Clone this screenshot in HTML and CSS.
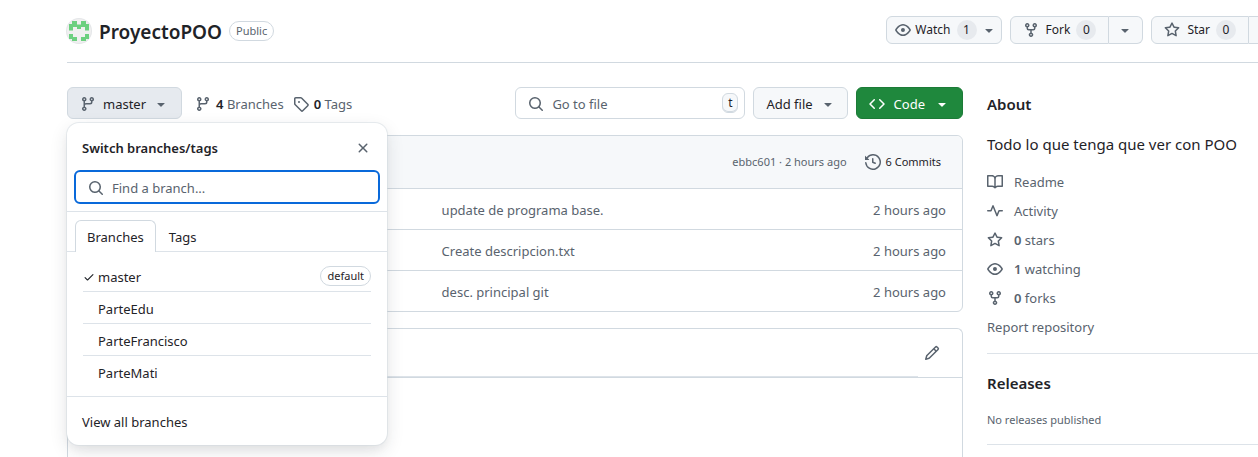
FILE: index.html
```html
<!DOCTYPE html>
<html lang="en">
<head>
<meta charset="utf-8">
<title>ProyectoPOO</title>
<link rel="stylesheet" href="styles.css">
</head>
<body>
<svg class="sprite" aria-hidden="true">
  <symbol id="branch" viewBox="0 0 16 16"><path d="M9.5 3.25a2.25 2.25 0 1 1 3 2.122V6A2.5 2.5 0 0 1 10 8.5H6a1 1 0 0 0-1 1v1.128a2.251 2.251 0 1 1-1.5 0V5.372a2.25 2.25 0 1 1 1.5 0v1.836A2.493 2.493 0 0 1 6 7h4a1 1 0 0 0 1-1v-.628A2.25 2.25 0 0 1 9.5 3.25Zm-6 0a.75.75 0 1 0 1.5 0 .75.75 0 0 0-1.5 0Zm8.25-.75a.75.75 0 1 0 0 1.5.75.75 0 0 0 0-1.5ZM4.25 12a.75.75 0 1 0 0 1.5.75.75 0 0 0 0-1.5Z"/></symbol>
  <symbol id="tag" viewBox="0 0 16 16"><path d="M1 7.775V2.75C1 1.784 1.784 1 2.75 1h5.025c.464 0 .91.184 1.238.513l6.25 6.25a1.75 1.75 0 0 1 0 2.474l-5.026 5.026a1.75 1.75 0 0 1-2.474 0l-6.25-6.25A1.752 1.752 0 0 1 1 7.775Zm1.5 0c0 .066.026.13.073.177l6.25 6.25a.25.25 0 0 0 .354 0l5.025-5.025a.25.25 0 0 0 0-.354l-6.25-6.25a.25.25 0 0 0-.177-.073H2.75a.25.25 0 0 0-.25.25ZM6 5a1 1 0 1 1 0 2 1 1 0 0 1 0-2Z"/></symbol>
  <symbol id="caret" viewBox="0 0 16 16"><path d="m4.427 7.427 3.396 3.396a.25.25 0 0 0 .354 0l3.396-3.396A.25.25 0 0 0 11.396 7H4.604a.25.25 0 0 0-.177.427Z"/></symbol>
  <symbol id="search" viewBox="0 0 16 16"><path d="M10.68 11.74a6 6 0 0 1-7.922-8.982 6 6 0 0 1 8.982 7.922l3.04 3.04a.749.749 0 0 1-.326 1.275.749.749 0 0 1-.734-.215ZM11.5 7a4.499 4.499 0 1 0-8.997 0A4.499 4.499 0 0 0 11.5 7Z"/></symbol>
  <symbol id="x" viewBox="0 0 16 16"><path d="M3.72 3.72a.75.75 0 0 1 1.06 0L8 6.94l3.22-3.22a.749.749 0 0 1 1.275.326.749.749 0 0 1-.215.734L9.06 8l3.22 3.22a.749.749 0 0 1-.326 1.275.749.749 0 0 1-.734-.215L8 9.06l-3.22 3.22a.751.751 0 0 1-1.042-.018.751.751 0 0 1-.018-1.042L6.94 8 3.72 4.78a.75.75 0 0 1 0-1.06Z"/></symbol>
  <symbol id="check" viewBox="0 0 16 16"><path d="M13.78 4.22a.75.75 0 0 1 0 1.06l-7.25 7.25a.75.75 0 0 1-1.06 0L2.22 9.28a.751.751 0 0 1 .018-1.042.751.751 0 0 1 1.042-.018L6 10.94l6.72-6.72a.75.75 0 0 1 1.06 0Z"/></symbol>
  <symbol id="code" viewBox="0 0 16 16"><path d="m11.28 3.22 4.25 4.25a.75.75 0 0 1 0 1.06l-4.25 4.25a.749.749 0 0 1-1.275-.326.749.749 0 0 1 .215-.734L13.94 8l-3.72-3.72a.749.749 0 0 1 .326-1.275.749.749 0 0 1 .734.215Zm-6.56 0a.751.751 0 0 1 1.042.018.751.751 0 0 1 .018 1.042L2.06 8l3.72 3.72a.749.749 0 0 1-.326 1.275.749.749 0 0 1-.734-.215L.47 8.53a.75.75 0 0 1 0-1.06Z"/></symbol>
  <symbol id="history" viewBox="0 0 16 16"><path d="m.427 1.927 1.215 1.215a8.002 8.002 0 1 1-1.6 5.685.75.75 0 1 1 1.493-.154 6.5 6.5 0 1 0 1.18-4.458l1.358 1.358A.25.25 0 0 1 3.896 6H.25A.25.25 0 0 1 0 5.75V2.104a.25.25 0 0 1 .427-.177ZM7.75 4a.75.75 0 0 1 .75.75v2.992l2.028.812a.75.75 0 0 1-.557 1.392l-2.5-1A.751.751 0 0 1 7 8.25v-3.5A.75.75 0 0 1 7.75 4Z"/></symbol>
  <symbol id="eye" viewBox="0 0 16 16"><path d="M8 2c1.981 0 3.671.992 4.933 2.078 1.27 1.091 2.187 2.345 2.637 3.023a1.62 1.62 0 0 1 0 1.798c-.45.678-1.367 1.932-2.637 3.023C11.67 13.008 9.981 14 8 14c-1.981 0-3.671-.992-4.933-2.078C1.797 10.83.88 9.576.43 8.898a1.62 1.62 0 0 1 0-1.798c.45-.677 1.367-1.931 2.637-3.022C4.33 2.992 6.019 2 8 2ZM1.679 7.932a.12.12 0 0 0 0 .136c.411.622 1.241 1.75 2.366 2.717C5.176 11.758 6.527 12.5 8 12.5c1.473 0 2.825-.742 3.955-1.715 1.124-.967 1.954-2.096 2.366-2.717a.12.12 0 0 0 0-.136c-.412-.621-1.242-1.75-2.366-2.717C10.824 4.242 9.473 3.5 8 3.5c-1.473 0-2.825.742-3.955 1.715-1.124.967-1.954 2.096-2.366 2.717ZM8 10a2 2 0 1 1-.001-3.999A2 2 0 0 1 8 10Z"/></symbol>
  <symbol id="fork" viewBox="0 0 16 16"><path d="M5 5.372v.878c0 .414.336.75.75.75h4.5a.75.75 0 0 0 .75-.75v-.878a2.25 2.25 0 1 1 1.5 0v.878a2.25 2.25 0 0 1-2.25 2.25h-1.5v2.128a2.251 2.251 0 1 1-1.5 0V8.5h-1.5A2.25 2.25 0 0 1 3.5 6.25v-.878a2.25 2.25 0 1 1 1.5 0ZM5 3.25a.75.75 0 1 0-1.5 0 .75.75 0 0 0 1.5 0Zm6.75.75a.75.75 0 1 0 0-1.5.75.75 0 0 0 0 1.5Zm-3 8.75a.75.75 0 1 0-1.5 0 .75.75 0 0 0 1.5 0Z"/></symbol>
  <symbol id="star" viewBox="0 0 16 16"><path d="M8 .25a.75.75 0 0 1 .673.418l1.882 3.815 4.21.612a.75.75 0 0 1 .416 1.279l-3.046 2.97.719 4.192a.751.751 0 0 1-1.088.791L8 12.347l-3.766 1.98a.75.75 0 0 1-1.088-.79l.72-4.194L.818 6.374a.75.75 0 0 1 .416-1.28l4.21-.611L7.327.668A.75.75 0 0 1 8 .25Zm0 2.445L6.615 5.5a.75.75 0 0 1-.564.41l-3.097.45 2.24 2.184a.75.75 0 0 1 .216.664l-.528 3.084 2.769-1.456a.75.75 0 0 1 .698 0l2.77 1.456-.53-3.084a.75.75 0 0 1 .216-.664l2.24-2.183-3.096-.45a.75.75 0 0 1-.564-.41L8 2.694Z"/></symbol>
  <symbol id="book" viewBox="0 0 16 16"><path d="M0 1.75A.75.75 0 0 1 .75 1h4.253c1.227 0 2.317.59 3 1.501A3.743 3.743 0 0 1 11.006 1h4.245a.75.75 0 0 1 .75.75v10.5a.75.75 0 0 1-.75.75h-4.507a2.25 2.25 0 0 0-1.591.659l-.622.621a.75.75 0 0 1-1.06 0l-.622-.621A2.25 2.25 0 0 0 5.258 13H.75a.75.75 0 0 1-.75-.75Zm7.251 10.324.004-5.073-.002-2.253A2.25 2.25 0 0 0 5.003 2.5H1.5v9h3.757a3.75 3.75 0 0 1 1.994.574ZM8.755 4.75l-.004 7.322a3.752 3.752 0 0 1 1.992-.572H14.5v-9h-3.495a2.25 2.25 0 0 0-2.25 2.25Z"/></symbol>
  <symbol id="pulse" viewBox="0 0 16 16"><path d="M6 2c.306 0 .582.187.696.471L10 10.731l1.304-3.26A.751.751 0 0 1 12 7h3.25a.75.75 0 0 1 0 1.5h-2.742l-1.812 4.528a.751.751 0 0 1-1.392 0L6 4.77 4.696 8.03A.75.75 0 0 1 4 8.5H.75a.75.75 0 0 1 0-1.5h2.742l1.812-4.529A.751.751 0 0 1 6 2Z"/></symbol>
  <symbol id="pencil" viewBox="0 0 16 16"><path d="M11.013 1.427a1.75 1.75 0 0 1 2.474 0l1.086 1.086a1.75 1.75 0 0 1 0 2.474l-8.61 8.61c-.21.21-.47.364-.756.445l-3.251.93a.75.75 0 0 1-.927-.928l.929-3.25c.081-.286.235-.547.445-.758l8.61-8.61Zm.176 4.823L9.75 4.81l-6.286 6.287a.253.253 0 0 0-.064.108l-.558 1.953 1.953-.558a.253.253 0 0 0 .108-.064Zm1.238-3.763a.25.25 0 0 0-.354 0L10.811 3.75l1.439 1.44 1.263-1.263a.25.25 0 0 0 0-.354Z"/></symbol>
</svg>
<div class="page">
  <header class="repo-head">
    <svg class="avatar" viewBox="0 0 26 26" role="img" aria-label="Owner"><circle cx="13" cy="13" r="13" fill="#e4e6e8"/><circle cx="13" cy="13" r="12" fill="#f0f0f0"/><path fill="#6cd07f" d="M6 3h5v3.5h4V3h5v3h3v6.5h-4V9h-4v2h-4V9H7v3.5H3V6h3zM3 16h4v3h4v4H6v-2H3zM23 16h-4v3h-4v4h5v-2h3z"/></svg>
    <h1 class="repo-name">ProyectoPOO</h1>
    <span class="pill">Public</span>
    <div class="head-actions">
      <button class="btn btn-sm watch"><svg class="icon"><use href="#eye"/></svg>Watch <span class="count">1</span><svg class="icon"><use href="#caret"/></svg></button>
      <div class="group">
        <button class="btn btn-sm first"><svg class="icon"><use href="#fork"/></svg><span>Fork</span><span class="count">0</span></button>
        <button class="btn btn-sm last" aria-label="Fork options"><svg class="icon"><use href="#caret"/></svg></button>
      </div>
      <div class="group">
        <button class="btn btn-sm first"><svg class="icon"><use href="#star"/></svg><span>Star</span><span class="count">0</span></button>
        <button class="btn btn-sm last" aria-label="Star options"><svg class="icon"><use href="#caret"/></svg></button>
      </div>
    </div>
  </header>
  <div class="columns">
    <main class="main">
      <div class="toolbar">
        <div class="switcher">
          <button class="btn btn-active"><svg class="icon"><use href="#branch"/></svg>master<svg class="icon"><use href="#caret"/></svg></button>
          <div class="popup" role="dialog" aria-labelledby="popup-title">
            <div class="popup-head">
              <h2 class="popup-title" id="popup-title">Switch branches/tags</h2>
              <button class="close" aria-label="Close"><svg class="icon"><use href="#x"/></svg></button>
            </div>
            <div class="popup-search">
              <label class="field field-focus"><svg class="icon"><use href="#search"/></svg><input type="text" placeholder="Find a branch..." aria-label="Find a branch"></label>
            </div>
            <div class="tabs" role="tablist">
              <button class="tab tab-on" role="tab" aria-selected="true">Branches</button>
              <button class="tab" role="tab" aria-selected="false">Tags</button>
            </div>
            <ul class="branches">
              <li><svg class="tick"><use href="#check"/></svg><a href="#">master</a><span class="pill pill-dark">default</span></li>
              <li><a href="#">ParteEdu</a></li>
              <li><a href="#">ParteFrancisco</a></li>
              <li><a href="#">ParteMati</a></li>
            </ul>
            <a class="view-all" href="#">View all branches</a>
          </div>
        </div>
        <nav class="refs">
          <a href="#"><svg class="icon"><use href="#branch"/></svg><span><strong>4</strong> Branches</span></a>
          <a href="#"><svg class="icon"><use href="#tag"/></svg><span><strong>0</strong> Tags</span></a>
        </nav>
        <label class="field file-search"><svg class="icon"><use href="#search"/></svg><input type="text" placeholder="Go to file" aria-label="Go to file"><kbd>t</kbd></label>
        <button class="btn btn-add">Add file<svg class="icon"><use href="#caret"/></svg></button>
        <button class="btn btn-code"><svg class="icon"><use href="#code"/></svg>Code<svg class="icon"><use href="#caret"/></svg></button>
      </div>
      <section class="box">
        <div class="commit-bar">
          <span>ebbc601 · 2 hours ago</span>
          <a href="#"><svg class="icon"><use href="#history"/></svg>6 Commits</a>
        </div>
        <table class="files">
          <tbody>
            <tr><td class="name"></td><td>update de programa base.</td><td class="age">2 hours ago</td></tr>
            <tr><td class="name"></td><td>Create descripcion.txt</td><td class="age">2 hours ago</td></tr>
            <tr><td class="name"></td><td>desc. principal git</td><td class="age">2 hours ago</td></tr>
          </tbody>
        </table>
      </section>
      <section class="box readme">
        <div class="readme-bar">
          <div class="readme-tabs"></div>
          <button class="edit" aria-label="Edit file"><svg class="icon"><use href="#pencil"/></svg></button>
        </div>
      </section>
    </main>
    <aside class="side">
      <section class="about">
        <h2>About</h2>
        <p class="desc">Todo lo que tenga que ver con POO</p>
        <ul class="facts">
          <li><a href="#"><svg class="icon"><use href="#book"/></svg>Readme</a></li>
          <li><a href="#"><svg class="icon"><use href="#pulse"/></svg>Activity</a></li>
          <li><a href="#"><svg class="icon"><use href="#star"/></svg><span><strong>0</strong> stars</span></a></li>
          <li><a href="#"><svg class="icon"><use href="#eye"/></svg><span><strong>1</strong> watching</span></a></li>
          <li><a href="#"><svg class="icon"><use href="#fork"/></svg><span><strong>0</strong> forks</span></a></li>
          <li><a href="#">Report repository</a></li>
        </ul>
      </section>
      <section class="releases">
        <h2>Releases</h2>
        <p class="note">No releases published</p>
      </section>
    </aside>
  </div>
</div>
</body>
</html>
```

FILE: styles.css
```css
:root {
  --fg: #1f2328;
  --muted: #59636e;
  --line: #d1d9e0;
  --soft-line: #dde3e9;
  --subtle: #f6f8fa;
  --text: 13px;
  --small: 11px;
}
* { box-sizing: border-box; }
html { overflow: hidden; }
body {
  margin: 0;
  color: var(--fg);
  background: #fff;
  font: 400 var(--text)/20px "Noto Sans", "Open Sans", sans-serif;
}
h1, h2, p, ul { margin: 0; padding: 0; }
ul { list-style: none; }
a { color: inherit; text-decoration: none; }
strong, h1, h2 { font-weight: 600; }
button, input { font: inherit; color: inherit; }
.sprite { display: none; }
.icon { width: 16px; height: 16px; flex: none; fill: var(--muted); }

.page {
  display: flex;
  flex-direction: column;
  min-height: 100vh;
  padding-left: 66px;
  margin-right: -25px;
}

/* Repository header */
.repo-head {
  display: flex;
  align-items: center;
  gap: 7px;
  height: 63px;
  border-bottom: 1px solid var(--line);
  margin-left: 1px;
}
.avatar { width: 26px; height: 26px; margin-left: -1px; }
.repo-name { font-size: 19px; line-height: 30px; padding-top: 2px; }
.pill {
  padding: 0 6px;
  border: 1px solid var(--line);
  border-radius: 10px;
  color: var(--muted);
  font-size: var(--small);
  line-height: 18px;
}
.pill-dark { color: var(--fg); }
.head-actions { display: flex; gap: 8px; margin-left: auto; padding-bottom: 2px; }
.group { display: flex; }

.btn {
  display: flex;
  align-items: center;
  gap: 7px;
  height: 32px;
  padding: 2px 12px 0;
  border: 1px solid var(--line);
  border-radius: 6px;
  background: var(--subtle);
  white-space: nowrap;
}
.btn-sm { height: 28px; padding-top: 0; font-size: 12px; }
.btn-sm.first { gap: 6px; border-radius: 6px 0 0 6px; }
.btn-sm.first .icon { margin-right: 1px; }
.btn-sm.last { padding: 0 9px 0 8px; border-left: 0; border-radius: 0 6px 6px 0; }
.watch { padding: 0 4px 0 8px; gap: 4px; }
.watch .count { margin-left: 2px; }
.count {
  min-width: 20px;
  padding: 0 6px;
  border-radius: 10px;
  background: #e7eaee;
  text-align: center;
}
.btn-active { background: #e6eaef; }
.btn-add { padding: 2px 11px 0 12px; }
.btn-code { gap: 9px; background: #1f883d; border-color: #1c7b37; color: #fff; }
.btn-code .icon { fill: #fff; }

/* Columns */
.columns { display: flex; flex: 1; gap: 24px; padding: 24px 0 0 1px; }
.main { display: flex; flex: 1; flex-direction: column; min-width: 0; }
.side { width: 296px; flex: none; }

.toolbar { display: flex; gap: 8px; margin-bottom: 16px; }
.switcher { position: relative; }
.refs { display: flex; align-items: center; gap: 9px; margin: 0 auto 0 5px; padding-top: 1px; color: var(--muted); }
.refs a { display: flex; align-items: center; gap: 5px; }
.refs strong { color: var(--fg); }

.field {
  display: flex;
  align-items: center;
  gap: 8px;
  height: 32px;
  padding: 0 6px 0 12px;
  border: 1px solid var(--line);
  border-radius: 6px;
  background: #fff;
}
.field .icon { margin-top: 2px; }
.field input { flex: 1; min-width: 0; padding: 1px 0 0; border: 0; outline: 0; background: none; }
.field input::placeholder { color: var(--muted); opacity: 1; }
.file-search { width: 230px; }
.field-focus { height: 34px; border: 2px solid #0969da; }
kbd {
  width: 16px;
  border: 1px solid var(--line);
  border-radius: 6px;
  background: var(--subtle);
  box-shadow: inset 0 -1px 0 var(--line);
  font: 12px/18px "Noto Sans", sans-serif;
  text-align: center;
}

.box { border: 1px solid var(--line); border-radius: 6px; }
.commit-bar {
  display: flex;
  align-items: center;
  justify-content: flex-end;
  gap: 18px;
  height: 52px;
  padding: 0 21px;
  border-radius: 6px 6px 0 0;
  background: var(--subtle);
  color: var(--muted);
  font-size: var(--small);
}
.commit-bar a { display: flex; align-items: center; gap: 5px; color: var(--fg); }
.files { width: 100%; border-spacing: 0; table-layout: fixed; color: var(--muted); }
.files td { height: 41px; padding: 1px 16px 0; border-top: 1px solid var(--line); }
.files .name { width: 40%; }
.files .age { width: 136px; text-align: right; }
.readme { flex: 1; margin-top: 16px; border-bottom: 0; border-radius: 6px 6px 0 0; }
.readme-bar { display: flex; align-items: stretch; height: 49px; border-bottom: 1px solid var(--line); }
.readme-tabs { flex: 1; border-bottom: 1px solid var(--soft-line); }
.edit { display: flex; align-items: center; width: 44px; padding: 0 6px; border: 0; background: none; }

/* Branch menu */
.popup {
  position: absolute;
  z-index: 1;
  top: calc(100% + 4px);
  left: 0;
  width: 320px;
  border-radius: 12px;
  background: #fff;
  box-shadow: 0 0 0 1px rgba(209, 217, 224, .5), 0 6px 12px -3px rgba(37, 41, 46, .06), 0 6px 18px rgba(37, 41, 46, .12);
}
.popup-head { display: flex; align-items: center; justify-content: space-between; height: 47px; padding: 2px 16px 0 15px; }
.popup-title { font-size: var(--text); }
.close { display: flex; padding: 0; border: 0; background: none; }
.popup-search { padding: 0 7px 7px; border-bottom: 1px solid var(--soft-line); }
.tabs { display: flex; padding: 8px 8px 0; border-bottom: 1px solid var(--soft-line); }
.tab { height: 31px; padding: 2px 11px 0 12px; border: 1px solid transparent; border-bottom: 0; background: none; }
.tab-on { height: 32px; margin-bottom: -1px; padding: 2px 11px 1px; border-color: var(--line); border-radius: 6px 6px 0 0; background: #fff; }
.branches { padding: 8px 16px; border-bottom: 1px solid var(--soft-line); }
.branches li {
  display: flex;
  align-items: center;
  height: 32px;
  padding: 2px 0 0 15px;
  border-bottom: 1px solid var(--soft-line);
}
.branches li:last-child { border-bottom: 0; }
.branches .tick { width: 12px; height: 12px; margin-left: -15px; margin-right: 3px; fill: var(--fg); }
.branches .pill { margin: 0 0 2px auto; }
.view-all { display: block; padding: 15px 15px 13px; }

/* Sidebar */
.side h2 { font-size: 15px; line-height: 24px; }
.about { padding: 5px 0 16px; border-bottom: 1px solid var(--soft-line); }
.desc { margin: 16px 0; font-size: 15px; line-height: 24px; }
.facts { display: grid; gap: 9px; color: var(--muted); }
.facts a { display: flex; align-items: center; gap: 11px; }
.releases { padding: 17px 0 14px; border-bottom: 1px solid var(--soft-line); }
.note { margin-top: 15px; color: var(--muted); font-size: var(--small); }
```
